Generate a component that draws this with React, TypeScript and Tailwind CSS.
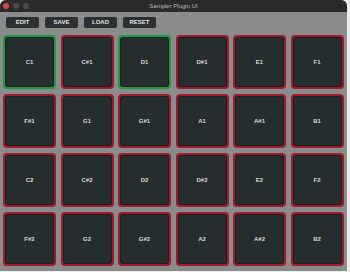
const PADS = [
  'C1', 'C#1', 'D1', 'D#1', 'E1', 'F1',
  'F#1', 'G1', 'G#1', 'A1', 'A#1', 'B1',
  'C2', 'C#2', 'D2', 'D#2', 'E2', 'F2',
  'F#2', 'G2', 'G#2', 'A2', 'A#2', 'B2',
];

const ACTIVE = new Set(['C1', 'D1']);

const BUTTONS = ['EDIT', 'SAVE', 'LOAD', 'RESET'];

function Pad({ note }: { note: string }) {
  const active = ACTIVE.has(note);
  return (
    <div
      className={`h-[54px] rounded-[4px] p-[2px] ${active ? 'bg-[#1f9a3c]' : 'bg-[#a11a2c]'}`}
    >
      <div className="w-full h-full rounded-[3px] bg-[#262d2f] flex items-center justify-center border border-black/30">
        <span className="text-[6px] text-[#d6d9da] font-semibold">{note}</span>
      </div>
    </div>
  );
}

export default function App() {
  return (
    <div className="w-[350px] h-[272px] bg-[#ececec] overflow-hidden" style={{ fontFamily: '"Liberation Sans", Arial, sans-serif' }}>
      <div className="w-[347px] h-[271px] rounded-t-[6px] overflow-hidden bg-[#8a8b8b] flex flex-col">
        {/* Title bar */}
        <div className="relative h-[12px] bg-[#2a2a2a] flex items-center px-[3px] gap-[4px] shrink-0">
          <span className="w-[6px] h-[6px] rounded-full bg-[#e0443e]" />
          <span className="w-[6px] h-[6px] rounded-full bg-[#4a4a4a]" />
          <span className="w-[6px] h-[6px] rounded-full bg-[#4a4a4a]" />
          <span className="absolute inset-0 flex items-center justify-center text-[6px] text-[#bdbdbd]">
            Sampler Plugin UI
          </span>
        </div>

        {/* Toolbar */}
        <div className="flex gap-[6px] pl-[6px] pt-[5px] shrink-0">
          {BUTTONS.map((b) => (
            <div
              key={b}
              className="w-[33px] h-[11px] rounded-[2px] bg-[#2a2f31] flex items-center justify-center text-[6px] font-bold text-[#e4e6e7]"
            >
              {b}
            </div>
          ))}
        </div>

        {/* Pads */}
        <div className="grid grid-cols-[repeat(6,53px)] gap-x-[4.5px] gap-y-[5px] pl-[3px] pt-[7px]">
          {PADS.map((n) => (
            <Pad key={n} note={n} />
          ))}
        </div>
      </div>
    </div>
  );
}
